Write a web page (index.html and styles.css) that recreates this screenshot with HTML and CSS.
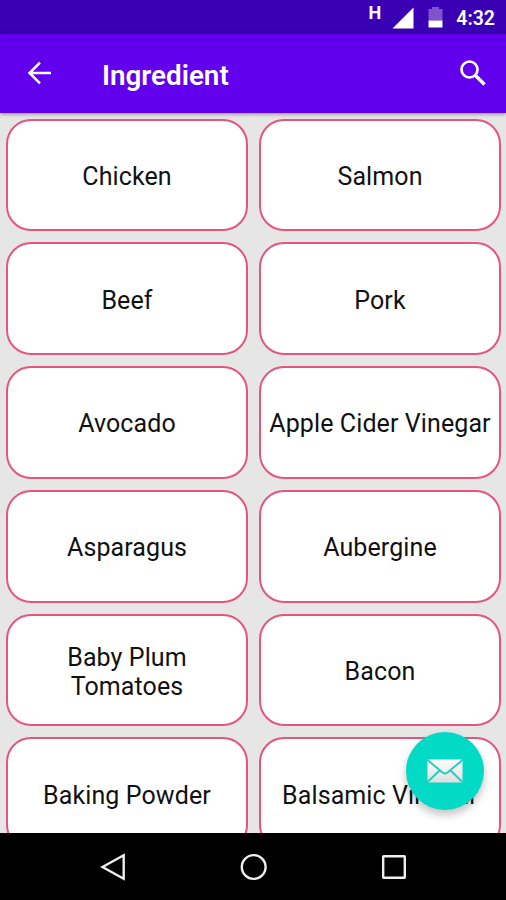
FILE: index.html
```html
<!DOCTYPE html>
<html lang="en">
<head>
<meta charset="utf-8">
<title>Ingredient</title>
<link rel="stylesheet" href="styles.css">
</head>
<body>
<div class="screen">
  <div class="status">
    <span class="network">H</span>
    <svg class="signal" width="22" height="22" viewBox="0 0 22 22"><path d="M0.5 21.5L21.5 0.5V21.5Z" fill="#fff"/></svg>
    <svg class="battery" width="15" height="21" viewBox="0 0 15 21"><path d="M4 0h7v2h3.500v11.500h-14V2H4z" fill="#7e53cb"/><path d="M.5 13.500h14V20.500H.5z" fill="#fff"/></svg>
    <span class="clock">4:32</span>
  </div>
  <header class="appbar">
    <svg class="back" width="25" height="24" viewBox="0 0 25 24" fill="none" stroke="#fff" stroke-width="2.500"><path d="M25 12H3.500M14 1.700L3.500 12L14 22.300"/></svg>
    <h1>Ingredient</h1>
    <svg class="search" width="28" height="28" viewBox="0 0 28 28" fill="none" stroke="#fff"><circle cx="10.500" cy="10.500" r="8" stroke-width="2.700"/><path d="M16.500 16.500L25.500 25.500" stroke-width="3.400"/></svg>
  </header>
  <main class="grid">
    <div class="card">Chicken</div>
    <div class="card">Salmon</div>
    <div class="card">Beef</div>
    <div class="card">Pork</div>
    <div class="card">Avocado</div>
    <div class="card">Apple Cider Vinegar</div>
    <div class="card">Asparagus</div>
    <div class="card">Aubergine</div>
    <div class="card">Baby Plum<br>Tomatoes</div>
    <div class="card">Bacon</div>
    <div class="card">Baking Powder</div>
    <div class="card">Balsamic Vinegar</div>
  </main>
  <button class="fab" aria-label="Email">
    <svg width="36" height="24" viewBox="0 0 36 24">
      <defs><linearGradient id="paper" x1="0" y1="0" x2="0" y2="1"><stop offset="0" stop-color="#fff"/><stop offset="1" stop-color="#dedede"/></linearGradient></defs>
      <rect x=".5" y=".5" width="35" height="23" rx="1" fill="url(#paper)"/>
      <path d="M.5 1L15.500 13.500Q18 15.500 20.500 13.500L35.500 1M.5 23L12.500 11.500M35.500 23L23.500 11.500" fill="none" stroke="#1fcfbd" stroke-width="1.900"/>
    </svg>
  </button>
  <nav class="navbar">
    <svg width="28" height="28" viewBox="0 0 28 28"><path d="M2.500 14L23.700 2.200V25.800Z"/></svg>
    <svg width="28" height="28" viewBox="0 0 28 28"><circle cx="13.700" cy="14" r="11.900"/></svg>
    <svg width="28" height="28" viewBox="0 0 28 28"><rect x="3.200" y="3.200" width="21.600" height="21.600" rx=".5"/></svg>
  </nav>
</div>
</body>
</html>
```

FILE: styles.css
```css
* { box-sizing: border-box; }
body { margin: 0; font-family: Roboto, "Liberation Sans", sans-serif; }
svg { display: block; flex: none; }
.screen {
  position: relative;
  width: 506px;
  height: 900px;
  display: flex;
  flex-direction: column;
  overflow: hidden;
  background: #e6e6e6;
}
.status {
  flex: none;
  height: 34px;
  display: flex;
  align-items: flex-start;
  justify-content: flex-end;
  padding-right: 11px;
  background: #3a00b4;
  color: #fff;
}
.network { font-size: 18px; font-weight: 700; line-height: 20px; margin: 3px 11px 0 0; }
.signal { margin: 7px 14px 0 0; }
.battery { margin: 7px 13px 0 0; }
.clock { font-size: 19.5px; font-weight: 600; line-height: 24px; margin-top: 7px; }
.appbar {
  flex: none;
  height: 79px;
  display: flex;
  align-items: center;
  padding: 0 19px 2px 26px;
  background: #6200ee;
  color: #fff;
  z-index: 1;
  box-shadow: 0 1px 4px rgba(0, 0, 0, .4);
}
.appbar h1 { flex: 1; margin: 6px 0 0 51px; font-size: 27.8px; line-height: 32px; font-weight: 600; }
.grid {
  flex: 1;
  min-height: 0;
  display: grid;
  grid-template-columns: 242px 242px;
  grid-auto-rows: 112.8px;
  gap: 11px;
  padding: 5.5px 0 0 6px;
  overflow: hidden;
}
.card {
  display: flex;
  align-items: center;
  justify-content: center;
  padding-top: 3px;
  border: 2px solid #e4557f;
  border-radius: 25px;
  background: #fff;
  color: #111;
  font-size: 25px;
  line-height: 29px;
  letter-spacing: .1px;
  text-align: center;
  white-space: nowrap;
}
.fab {
  position: absolute;
  left: 406px;
  top: 732px;
  width: 78px;
  height: 78px;
  display: flex;
  align-items: center;
  justify-content: center;
  padding: 0;
  border: 0;
  border-radius: 50%;
  background: #03dac6;
  box-shadow: 0 5px 9px rgba(0, 0, 0, .24);
}
.navbar {
  flex: none;
  height: 67px;
  display: flex;
  justify-content: space-between;
  align-items: center;
  padding: 0 98px 0 99.5px;
  background: #000;
  z-index: 1;
}
.navbar svg { fill: none; stroke: #eee; stroke-width: 2.4; }
```
